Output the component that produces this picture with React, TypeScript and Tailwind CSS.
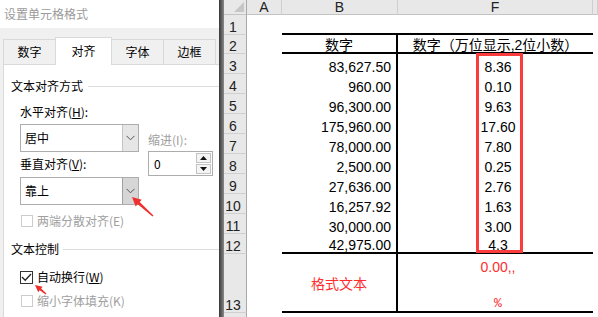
import React from "react";

const sans = "font-['Liberation_Sans','Noto_Sans_CJK_SC',sans-serif]";
const cols = "grid grid-cols-[23px_35px_116px_195px_1fr]";

function Chevron() {
  return (
    <svg width="9" height="6" viewBox="0 0 9 6">
      <path d="M0.5 0.8 L4.5 4.8 L8.5 0.8" fill="none" stroke="#555" strokeWidth="1" />
    </svg>
  );
}

function Select({ label, active }: { label: string; active?: boolean }) {
  return (
    <div className="w-[119px] h-[28px] border border-[#adadad] bg-white flex">
      <div className="flex-1 flex items-center pl-[4px] leading-[16px]">{label}</div>
      <div
        className={
          active
            ? "w-[16px] h-full border-l border-[#a0a0a0] bg-[#d6d6d6] flex items-center justify-center"
            : "w-[16px] h-full border-l border-[#c4c4c4] bg-[#e6e6e6] flex items-center justify-center"
        }
      >
        <Chevron />
      </div>
    </div>
  );
}

function Spin() {
  return (
    <div className="w-[65px] h-[25px] border border-[#adadad] bg-white flex items-center pl-[5px]">
      <span className="leading-[16px]">0</span>
      <div className="ml-auto mr-[1px] w-[15px] h-full flex flex-col py-[1px] gap-[1px]">
        <div className="flex-1 border border-[#c4c4c4] bg-[#f4f4f4] flex items-center justify-center">
          <svg width="7" height="4" viewBox="0 0 7 4">
            <path d="M0 4 L3.5 0 L7 4 Z" fill="#111" />
          </svg>
        </div>
        <div className="flex-1 border border-[#c4c4c4] bg-[#f4f4f4] flex items-center justify-center">
          <svg width="7" height="4" viewBox="0 0 7 4">
            <path d="M0 0 L3.5 4 L7 0 Z" fill="#111" />
          </svg>
        </div>
      </div>
    </div>
  );
}

function Box({ checked, disabled }: { checked?: boolean; disabled?: boolean }) {
  return (
    <div
      className={
        disabled
          ? "w-[12px] h-[12px] border border-[#cccccc] bg-white"
          : "w-[13px] h-[13px] border border-[#333333] bg-white flex items-center justify-center"
      }
    >
      {checked && (
        <svg width="11" height="11" viewBox="0 0 11 11">
          <path d="M1 5 L4.2 8.2 L10 2" fill="none" stroke="#222" strokeWidth="1.3" />
        </svg>
      )}
    </div>
  );
}

function Dialog() {
  return (
    <div className="w-[219px] h-full flex flex-col bg-[#f0f0f0] font-['Noto_Sans_CJK_SC',sans-serif] text-[12px] text-black">
      <div className="h-[28px] bg-white flex items-center pl-[4px] text-[#9a9a9a] leading-[16px]">
        设置单元格格式
      </div>
      <div className="h-[9px]" />
      <div className="relative z-10 h-[28px] flex items-end pl-[3px] leading-[16px]">
        <div className="w-[53px] h-[25px] mb-px border border-b-0 border-[#d9d9d9] flex items-center justify-center">
          数字
        </div>
        <div className="-ml-px w-[57px] h-[28px] bg-white border border-b-0 border-[#d9d9d9] flex items-center justify-center pb-[2px]">
          对齐
        </div>
        <div className="-ml-px w-[53px] h-[25px] mb-px border border-b-0 border-[#d9d9d9] flex items-center justify-center">
          字体
        </div>
        <div className="-ml-px w-[53px] h-[25px] mb-px border border-b-0 border-[#d9d9d9] flex items-center justify-center">
          边框
        </div>
      </div>
      <div className="-mt-px flex-1 ml-[3px] bg-white border-l border-t border-[#d9d9d9] pl-[7px] pt-[13px] flex flex-col leading-[16px]">
        <div className="h-[16px] flex items-center">
          <span>文本对齐方式</span>
          <div className="ml-[5px] flex-1 h-px bg-[#dcdcdc]" />
        </div>
        <div className="pl-[9px] flex flex-col">
          <div className="mt-[10px] h-[16px]">
            水平对齐(<span className="underline">H</span>):
          </div>
          <div className="mt-[4px] flex">
            <div className="flex flex-col w-[119px]">
              <Select label="居中" />
              <div className="mt-[4px] h-[16px]">
                垂直对齐(<span className="underline">V</span>):
              </div>
              <div className="mt-[5px]">
                <Select label="靠上" active />
              </div>
            </div>
            <div className="ml-[9px] flex flex-col">
              <div className="mt-[8px] h-[16px] text-[#a0a0a0]">缩进(I):</div>
              <div className="mt-[3px]">
                <Spin />
              </div>
            </div>
          </div>
          <div className="mt-[8px] h-[16px] flex items-center pl-[1px] gap-[4px] text-[#a0a0a0]">
            <Box disabled />
            <span>两端分散对齐(E)</span>
          </div>
        </div>
        <div className="mt-[12px] h-[16px] flex items-center">
          <span>文本控制</span>
          <div className="ml-[4px] flex-1 h-px bg-[#dcdcdc]" />
        </div>
        <div className="pl-[9px] flex flex-col">
          <div className="mt-[12px] h-[16px] flex items-center gap-[4px]">
            <Box checked />
            <span>
              自动换行(<span className="underline">W</span>)
            </span>
          </div>
          <div className="mt-[8px] h-[16px] flex items-center pl-[1px] gap-[4px] text-[#a0a0a0]">
            <Box disabled />
            <span>缩小字体填充(K)</span>
          </div>
        </div>
      </div>
    </div>
  );
}

const rowHdr =
  "bg-[#e8e8e8] border-r border-b border-r-[#a8a8a8] border-b-[#d0d0d0] flex items-end justify-center pr-[4px] leading-[14px] text-[#222]";

const data: [string, string][] = [
  ["83,627.50", "8.36"],
  ["960.00", "0.10"],
  ["96,300.00", "9.63"],
  ["175,960.00", "17.60"],
  ["78,000.00", "7.80"],
  ["2,500.00", "0.25"],
  ["27,636.00", "2.76"],
  ["16,257.92", "1.63"],
  ["30,000.00", "3.00"],
  ["42,975.00", "4.3"],
];

function Sheet() {
  return (
    <div className={`flex-1 flex flex-col ${sans} text-[14px] text-black`}>
      <div className={`${cols} h-[15px]`}>
        <div className="relative bg-[#e8e8e8] border-r border-b border-r-[#a8a8a8] border-b-[#c4c4c4]">
          <div className="absolute right-[2px] bottom-[2px] w-0 h-0 border-l-[10px] border-l-transparent border-b-[10px] border-b-[#c6c6c6]" />
        </div>
        {["A", "B", "F", ""].map((c, i) => (
          <div
            key={i}
            className="bg-[#e8e8e8] border-r border-b border-r-[#cfcfcf] border-b-[#c4c4c4] flex items-center justify-center leading-[14px] text-[#222]"
          >
            {c}
          </div>
        ))}
      </div>
      <div className={`${cols} h-[20px]`}>
        <div className={rowHdr}>1</div>
        <div />
        <div className="border-b-2 border-black" />
        <div className="border-b-2 border-black" />
        <div />
      </div>
      <div className={`${cols} h-[19px]`}>
        <div className={rowHdr}>2</div>
        <div />
        <div className="border-b-2 border-r-2 border-black flex items-end justify-center leading-[14px]">数字</div>
        <div className="border-b-2 border-black flex items-end justify-center leading-[14px]">
          数字（万位显示,2位小数）
        </div>
        <div />
      </div>
      {data.map(([b, f], i) => (
        <div key={i} className={`${cols} h-[20px]`}>
          <div className={rowHdr}>{i + 3}</div>
          <div />
          <div
            className={
              i === 9
                ? "border-b-2 border-r-2 border-black flex items-end justify-end pr-[5px] leading-[14px]"
                : "border-r-2 border-black flex items-end justify-end pr-[5px] leading-[14px]"
            }
          >
            {b}
          </div>
          <div
            className={
              i === 9
                ? "border-b-2 border-black flex items-end justify-center pl-[5px] leading-[14px]"
                : "flex items-end justify-center pl-[5px] leading-[14px]"
            }
          >
            {f}
          </div>
          <div />
        </div>
      ))}
      <div className={`${cols} h-[59px]`}>
        <div className={rowHdr}>13</div>
        <div />
        <div className="border-b-2 border-r-2 border-black flex items-center justify-center pt-[2px] leading-[16px] text-[#ff2d2d]">
          格式文本
        </div>
        <div className="border-b-2 border-black flex flex-col items-center justify-between pt-[6px] pl-[5px] leading-[14px] text-[#ff2d2d]">
          <span>0.00,,</span>
          <span className="font-['Liberation_Mono',monospace] text-[13px]">%</span>
        </div>
        <div />
      </div>
      <div className={`${cols} flex-1`}>
        <div className="bg-[#e8e8e8] border-r border-r-[#a8a8a8]" />
      </div>
    </div>
  );
}

export default function App() {
  return (
    <div className="relative w-[598px] h-[317px] overflow-hidden flex bg-white">
      <Dialog />
      <div className="w-[5px] h-full bg-gradient-to-r from-[#383838] to-[#8a8a8a]" />
      <Sheet />
      <div className="absolute left-[476px] top-[53px] w-[47px] h-[200px] border-[3px] border-[#fa3c3c]" />
      <svg className="absolute left-[125px] top-[190px]" width="35" height="35" viewBox="0 0 35 35">
        <polygon
          points="7,7 16.7,9.7 14.69,11.93 28.47,25.48 27.53,26.52 12.67,14.15 10.66,16.38"
          fill="#ee3030"
        />
      </svg>
      <svg className="absolute left-[30px] top-[280px]" width="20" height="20" viewBox="0 0 20 20">
        <polygon
          points="5,5 12.65,6.73 11.19,8.51 16.38,13.53 15.62,14.47 9.67,10.37 8.21,12.15"
          fill="#ee3030"
        />
      </svg>
    </div>
  );
}
